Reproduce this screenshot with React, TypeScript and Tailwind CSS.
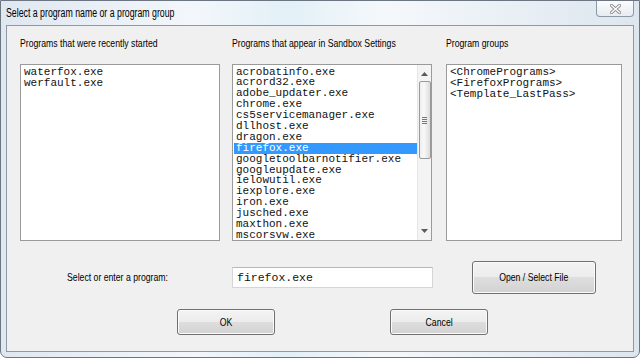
import React from 'react';

const ui = "font-['Liberation_Sans',Arial,sans-serif]";
const mono = "font-['Liberation_Mono','Courier_New',monospace]";

const recent = ['waterfox.exe', 'werfault.exe'];
const sandbox = [
  'acrobatinfo.exe',
  'acrord32.exe',
  'adobe_updater.exe',
  'chrome.exe',
  'cs5servicemanager.exe',
  'dllhost.exe',
  'dragon.exe',
  'firefox.exe',
  'googletoolbarnotifier.exe',
  'googleupdate.exe',
  'ielowutil.exe',
  'iexplore.exe',
  'iron.exe',
  'jusched.exe',
  'maxthon.exe',
  'mscorsvw.exe',
];
const groups = ['<ChromePrograms>', '<FirefoxPrograms>', '<Template_LastPass>'];

// the screenshot's text is squeezed sideways, so narrow the sans text a bit
const Narrow: React.FC<{ children: React.ReactNode; className?: string }> = ({ children, className = '' }) => (
  <span className={`inline-block whitespace-nowrap scale-x-[0.79] ${className}`}>{children}</span>
);

const Button: React.FC<{ label: string; className: string }> = ({ label, className }) => (
  <button
    className={`${className} ${ui} flex items-center justify-center rounded-[3px] border border-[#707070] bg-[linear-gradient(#f3f3f3,#ececec_50%,#dedede_50%,#d2d2d2)] text-[11px] text-black shadow-[inset_0_0_0_1px_#fbfbfb]`}
  >
    <Narrow className="origin-center">{label}</Narrow>
  </button>
);

const Column: React.FC<{ title: string; width: string; children: React.ReactNode }> = ({ title, width, children }) => (
  <div className={`flex flex-col ${width}`}>
    <div className={`${ui} h-[12px] text-[11px] leading-[12px] text-black`}>
      <Narrow className="origin-left">{title}</Narrow>
    </div>
    <div className="mt-[15px] h-[177px] border border-[#9a9a9a] bg-white overflow-hidden">{children}</div>
  </div>
);

const Scrollbar: React.FC = () => (
  <div className="w-[14px] h-full border-l border-[#e6e6e6] bg-[#f4f4f4] flex flex-col items-center">
    <svg width="7" height="4" className="mt-[7px]" viewBox="0 0 7 4">
      <path d="M0 4 L3.5 0 L7 4 Z" fill="#5a5a5a" />
    </svg>
    <div className="mt-[5px] w-[12px] h-[78px] rounded-[2px] border border-[#9a9a9a] bg-[linear-gradient(90deg,#eeeeee,#f8f8f8_40%,#dcdcdc)] flex flex-col items-center justify-center gap-[1px]">
      <div className="w-[5px] h-[1px] bg-[#777]" />
      <div className="w-[5px] h-[1px] bg-[#777]" />
      <div className="w-[5px] h-[1px] bg-[#777]" />
      <div className="w-[5px] h-[1px] bg-[#777]" />
    </div>
    <svg width="7" height="4" className="mt-auto mb-[7px]" viewBox="0 0 7 4">
      <path d="M0 0 L3.5 4 L7 0 Z" fill="#5a5a5a" />
    </svg>
  </div>
);

const App: React.FC = () => {
  return (
    <div className="w-[640px] h-[358px] overflow-hidden bg-white">
      <div className="w-[640px] h-[358px] flex flex-col border border-[#6b7682] rounded-b-[7px] bg-[linear-gradient(90deg,#dfe7f0,#f3f7fb_30%,#e2f0f7_45%,#f5f8fb_60%,#dde6ef)]">
        {/* Title bar */}
        <div className="h-[24px] flex items-start justify-between">
          <div className={`${ui} pl-[5px] pt-[5px] text-[12px] leading-[14px] text-black`}>
            <span className="inline-block whitespace-nowrap origin-left scale-x-[0.73]">
              Select a program name or a program group
            </span>
          </div>
          <div className="mr-[5px] w-[38px] h-[16px] rounded-b-[4px] border border-t-0 border-[#8d99a6] bg-[linear-gradient(#fbfcfd,#e7ecf1)] flex items-center justify-center">
            <svg width="11" height="10" viewBox="0 0 11 10">
              <path d="M1.5 1.5 L9.5 8.5 M9.5 1.5 L1.5 8.5" stroke="#8e8e8e" strokeWidth="3.2" strokeLinecap="square" />
              <path d="M1.5 1.5 L9.5 8.5 M9.5 1.5 L1.5 8.5" stroke="#ffffff" strokeWidth="1.3" strokeLinecap="square" />
            </svg>
          </div>
        </div>

        {/* Client area */}
        <div className="mx-[5px] h-[327px] border border-[#8e99a5] bg-[#f0f0f0] flex flex-col">
          <div className="flex pt-[11px] pl-[13px]">
            <Column title="Programs that were recently started" width="w-[200px]">
              <div className={`${mono} px-[3px] pt-[2px] text-[11px] leading-[10.9px] text-[#111]`}>
                {recent.map(r => (
                  <div key={r}>{r}</div>
                ))}
              </div>
            </Column>
            <div className="w-[12px]" />
            <Column title="Programs that appear in Sandbox Settings" width="w-[200px]">
              <div className="flex h-full">
                <div className={`${mono} flex-1 pl-[1px] pt-[1.5px] text-[11px] leading-[10.9px] text-[#111]`}>
                  {sandbox.map(s => (
                    <div
                      key={s}
                      className={`h-[10.9px] pl-[2px] whitespace-nowrap ${s === 'firefox.exe' ? 'bg-[#3399ff] text-white' : ''}`}
                    >
                      {s}
                    </div>
                  ))}
                </div>
                <Scrollbar />
              </div>
            </Column>
            <div className="w-[14px]" />
            <Column title="Program groups" width="w-[176px]">
              <div className={`${mono} px-[3px] pt-[2px] text-[11px] leading-[10.9px] text-[#111]`}>
                {groups.map(g => (
                  <div key={g}>{g}</div>
                ))}
              </div>
            </Column>
          </div>

          {/* Program entry row */}
          <div className="flex items-center mt-[20px] h-[33px]">
            <div className={`${ui} w-[225px] pl-[60px] text-[11px] text-black`}>
              <Narrow className="origin-left">Select or enter a program:</Narrow>
            </div>
            <div className="w-[201px] h-[21px] border border-[#d6d6d6] border-t-[#b8b8b8] bg-white flex items-center">
              <span className={`${mono} pl-[4px] text-[11.5px] text-[#111]`}>firefox.exe</span>
            </div>
            <Button label="Open / Select File" className="ml-[39px] w-[124px] h-[33px]" />
          </div>

          {/* Dialog buttons */}
          <div className="flex mt-[15px]">
            <Button label="OK" className="ml-[170px] w-[98px] h-[26px]" />
            <Button label="Cancel" className="ml-[115px] w-[98px] h-[26px]" />
          </div>
        </div>
      </div>
    </div>
  );
};

export default App;
